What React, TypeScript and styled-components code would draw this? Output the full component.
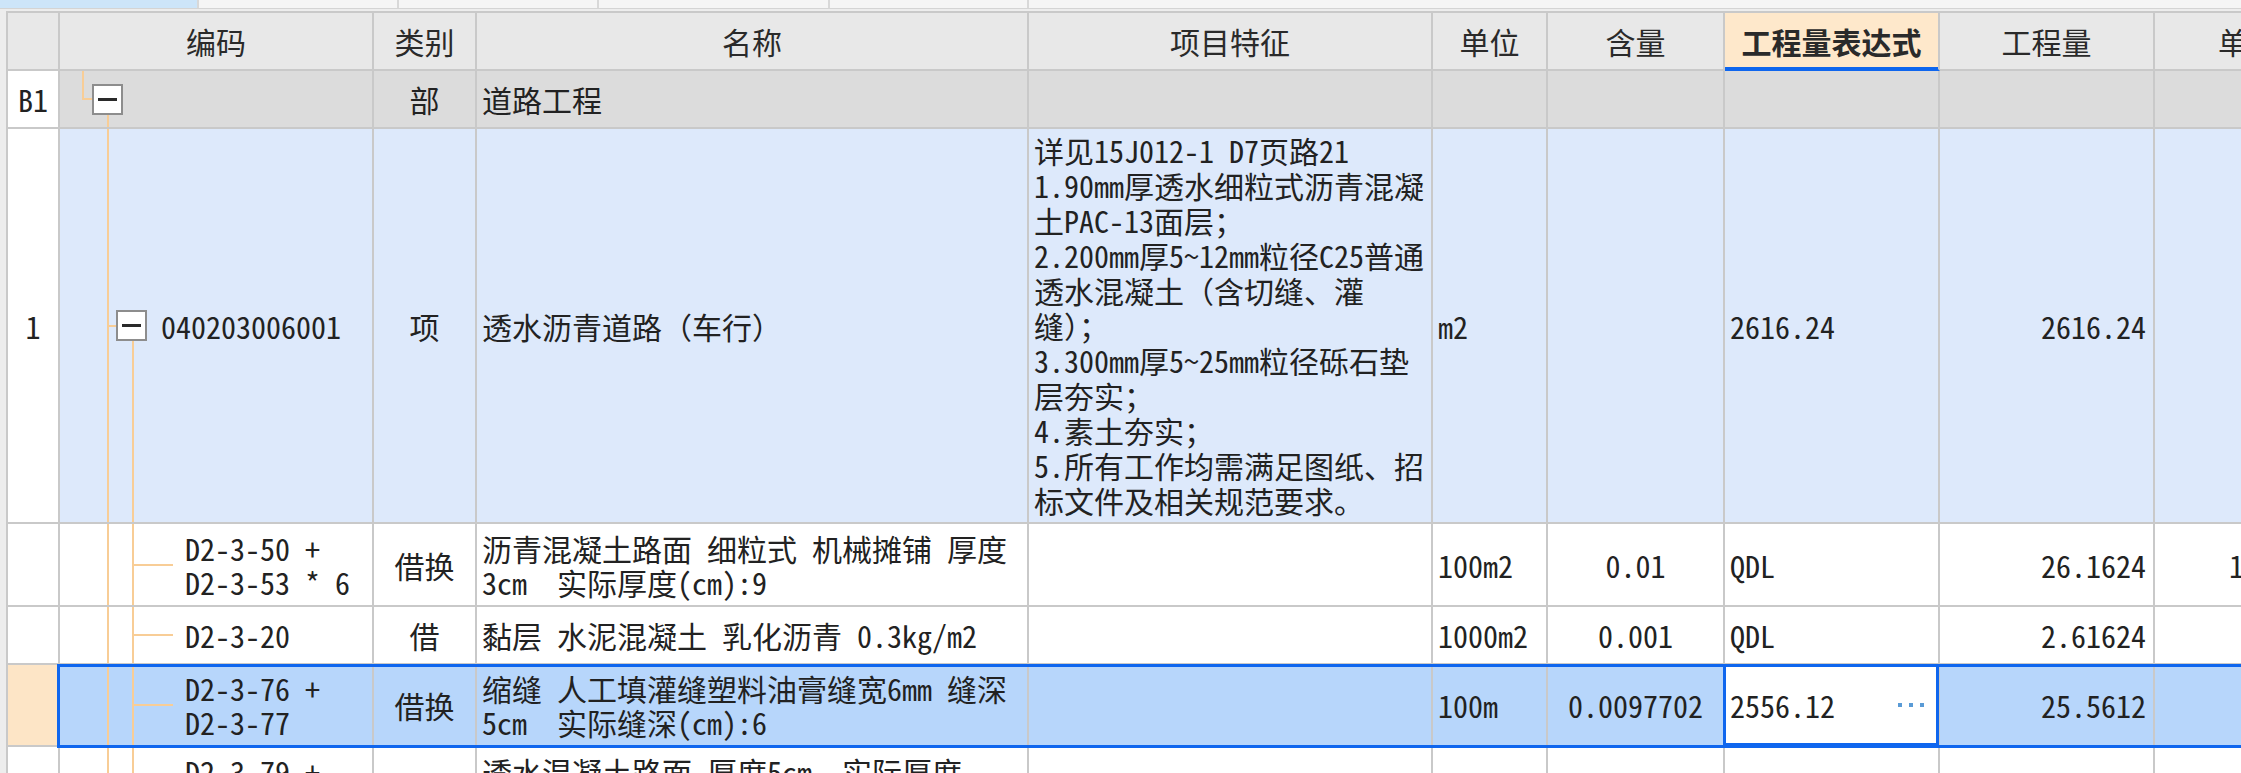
import React from 'react';
import styled, { createGlobalStyle, css } from 'styled-components';

const FONT = `"Noto Sans Mono CJK SC", "Noto Sans CJK SC", "Liberation Mono", monospace`;
const COLS = '52px 314px 103px 552px 404px 115px 177px 215px 215px 188px';
const LINE = '#c9c9c9';
const TREE = '#f8cd96';
const BLUE = '#0f66ee';

const GlobalStyle = createGlobalStyle`
  html, body { margin: 0; padding: 0; width: 2241px; height: 773px; overflow: hidden; background: #ededed; }
  #root { width: 2241px; height: 773px; overflow: hidden; }
  * { box-sizing: border-box; }
`;

const Page = styled.div`
  width: 2241px;
  height: 773px;
  overflow: hidden;
  display: flex;
  flex-direction: column;
  font-family: ${FONT};
  font-size: 30px;
  color: #222;
`;

const TabStrip = styled.div`
  display: flex;
  flex: none;
  height: 9px;
  background: #f5f5f5;
  border-bottom: 1px solid #d4d4d4;
`;

const Tab = styled.div<{ $w: number; $active?: boolean }>`
  flex: none;
  width: ${(p) => p.$w}px;
  background: ${(p) => (p.$active ? '#cde5f9' : '#f5f5f5')};
  border-right: 2px solid #d8d8d8;
`;

const Table = styled.div`
  flex: none;
  margin: 2px 0 0 6px;
  width: max-content;
  border-left: 2px solid ${LINE};
  border-top: 2px solid ${LINE};
`;

const Row = styled.div<{ $h: number; $bg: string; $selected?: boolean }>`
  display: grid;
  grid-template-columns: ${COLS};
  grid-template-rows: ${(p) => p.$h}px;
  height: ${(p) => p.$h}px;
  background: ${(p) => p.$bg};
  position: relative;
  ${(p) =>
    p.$selected &&
    css`
      &::after {
        content: '';
        position: absolute;
        left: 49px;
        right: -20px;
        top: -1px;
        bottom: -1px;
        border: 3px solid ${BLUE};
        pointer-events: none;
        z-index: 2;
      }
    `}
`;

type Align = 'left' | 'center' | 'right';

const Cell = styled.div<{ $align?: Align; $lh?: number; $bg?: string }>`
  min-width: 0;
  display: flex;
  align-items: center;
  justify-content: ${(p) =>
    p.$align === 'center' ? 'center' : p.$align === 'right' ? 'flex-end' : 'flex-start'};
  text-align: ${(p) => p.$align ?? 'left'};
  padding: 0 ${(p) => (p.$align === 'right' ? '7px' : '0')} 0 ${(p) => (p.$align === 'left' ? '5px' : '0')};
  border-right: 2px solid ${LINE};
  border-bottom: 2px solid ${LINE};
  background: ${(p) => p.$bg ?? 'transparent'};
  line-height: ${(p) => p.$lh ?? 34}px;
  white-space: pre;
  overflow: hidden;
`;

const HeadCell = styled(Cell).attrs({ $align: 'center' as Align })<{ $active?: boolean }>`
  color: #2a2a2a;
  ${(p) =>
    p.$active &&
    css`
      background: #fee8cb;
      font-weight: 700;
      border-bottom-color: ${BLUE};
      box-shadow: inset 0 -2px 0 ${BLUE};
    `}
`;

const CodeCell = styled(Cell)`
  align-items: stretch;
  padding: 0;
`;

const Guide = styled.div<{ $w: number; $x: number; $kind: 'pass' | 'tee' | 'elbow' }>`
  flex: none;
  align-self: stretch;
  width: ${(p) => p.$w}px;
  background-repeat: no-repeat;
  ${(p) => {
    const g = `linear-gradient(${TREE}, ${TREE})`;
    if (p.$kind === 'pass')
      return css`
        background-image: ${g};
        background-size: 2px 100%;
        background-position: ${p.$x}px 0;
      `;
    if (p.$kind === 'tee')
      return css`
        background-image: ${g}, ${g};
        background-size: 2px 100%, ${p.$w - p.$x}px 2px;
        background-position: ${p.$x}px 0, ${p.$x}px 50%;
      `;
    return css`
      background-image: ${g}, ${g};
      background-size: 2px 50%, ${p.$w - p.$x}px 2px;
      background-position: ${p.$x}px 0, ${p.$x}px 50%;
    `;
  }}
`;

const BoxCol = styled.div<{ $x: number }>`
  flex: none;
  align-self: stretch;
  width: 31px;
  display: flex;
  align-items: center;
  background: linear-gradient(${TREE}, ${TREE}) no-repeat;
  background-size: 2px 50%;
  background-position: ${(p) => p.$x}px 100%;
`;

const Toggle = styled.div`
  width: 31px;
  height: 31px;
  border: 2px solid #8d8d8d;
  background: #fff;
  display: flex;
  align-items: center;
  justify-content: center;
  &::before {
    content: '';
    width: 19px;
    height: 3px;
    background: #2a2a2a;
  }
`;

const CodeText = styled.div<{ $gap: number }>`
  align-self: center;
  margin-left: ${(p) => p.$gap}px;
  white-space: pre;
`;

const EditCell = styled(Cell)`
  position: relative;
  overflow: visible;
`;

const Editor = styled.div`
  position: absolute;
  left: -2px;
  right: -1px;
  top: -1px;
  bottom: -1px;
  z-index: 3;
  border: 3px solid ${BLUE};
  background: #fff;
  display: flex;
  align-items: center;
  justify-content: space-between;
  padding: 0 12px 0 4px;
`;

const Dots = styled.div`
  display: flex;
  gap: 7px;
  align-items: center;
`;

const Dot = styled.span`
  width: 4px;
  height: 4px;
  background: #5a9bd6;
`;

const TABS = [199, 200, 200, 231, 199];

const FEATURES = [
  '详见15J012-1 D7页路21',
  '1.90mm厚透水细粒式沥青混凝',
  '土PAC-13面层；',
  '2.200mm厚5~12mm粒径C25普通',
  '透水混凝土（含切缝、灌',
  '缝）；',
  '3.300mm厚5~25mm粒径砾石垫',
  '层夯实；',
  '4.素土夯实；',
  '5.所有工作均需满足图纸、招',
  '标文件及相关规范要求。',
].join('\n');

const ChildCode = ({ text }: { text: string }) => (
  <CodeCell>
    <Guide $kind="pass" $w={56} $x={47} />
    <Guide $kind="tee" $w={57} $x={16} />
    <CodeText $gap={12}>{text}</CodeText>
  </CodeCell>
);

export default function App() {
  return (
    <>
      <GlobalStyle />
      <Page>
        <TabStrip>
          {TABS.map((w, i) => (
            <Tab key={i} $w={w} $active={i === 0} />
          ))}
        </TabStrip>
        <Table>
          <Row $h={58} $bg="#e8e8e8">
            <HeadCell />
            <HeadCell>编码</HeadCell>
            <HeadCell>类别</HeadCell>
            <HeadCell>名称</HeadCell>
            <HeadCell>项目特征</HeadCell>
            <HeadCell>单位</HeadCell>
            <HeadCell>含量</HeadCell>
            <HeadCell $active>工程量表达式</HeadCell>
            <HeadCell>工程量</HeadCell>
            <HeadCell>单价</HeadCell>
          </Row>

          <Row $h={58} $bg="#dcdcdc">
            <Cell $align="center" $bg="#fff">B1</Cell>
            <CodeCell>
              <Guide $kind="elbow" $w={32} $x={22} />
              <BoxCol $x={15}>
                <Toggle />
              </BoxCol>
            </CodeCell>
            <Cell $align="center">部</Cell>
            <Cell $align="left">道路工程</Cell>
            <Cell />
            <Cell />
            <Cell />
            <Cell />
            <Cell />
            <Cell />
          </Row>

          <Row $h={395} $bg="#dde9fb">
            <Cell $align="center" $bg="#fff">1</Cell>
            <CodeCell>
              <Guide $kind="tee" $w={56} $x={47} />
              <BoxCol $x={16}>
                <Toggle />
              </BoxCol>
              <CodeText $gap={14}>040203006001</CodeText>
            </CodeCell>
            <Cell $align="center">项</Cell>
            <Cell $align="left">透水沥青道路（车行）</Cell>
            <Cell $align="left" $lh={35}>{FEATURES}</Cell>
            <Cell $align="left">m2</Cell>
            <Cell />
            <Cell $align="left">2616.24</Cell>
            <Cell $align="right">2616.24</Cell>
            <Cell />
          </Row>

          <Row $h={83} $bg="#fff">
            <Cell $bg="#fff" />
            <ChildCode text={'D2-3-50 +\nD2-3-53 * 6'} />
            <Cell $align="center">借换</Cell>
            <Cell $align="left">{'沥青混凝土路面 细粒式 机械摊铺 厚度\n3cm  实际厚度(cm):9'}</Cell>
            <Cell />
            <Cell $align="left">100m2</Cell>
            <Cell $align="center">0.01</Cell>
            <Cell $align="left">QDL</Cell>
            <Cell $align="right">26.1624</Cell>
            <Cell $align="right">1139.28</Cell>
          </Row>

          <Row $h={58} $bg="#fff">
            <Cell $bg="#fff" />
            <ChildCode text="D2-3-20" />
            <Cell $align="center">借</Cell>
            <Cell $align="left">黏层 水泥混凝土 乳化沥青 0.3kg/m2</Cell>
            <Cell />
            <Cell $align="left">1000m2</Cell>
            <Cell $align="center">0.001</Cell>
            <Cell $align="left">QDL</Cell>
            <Cell $align="right">2.61624</Cell>
            <Cell $align="right">48.12</Cell>
          </Row>

          <Row $h={82} $bg="#b7d6fb" $selected>
            <Cell $bg="#fde5c6" />
            <ChildCode text={'D2-3-76 +\nD2-3-77'} />
            <Cell $align="center">借换</Cell>
            <Cell $align="left">{'缩缝 人工填灌缝塑料油膏缝宽6mm 缝深\n5cm  实际缝深(cm):6'}</Cell>
            <Cell />
            <Cell $align="left">100m</Cell>
            <Cell $align="center">0.0097702</Cell>
            <EditCell>
              <Editor>
                <span>2556.12</span>
                <Dots>
                  <Dot />
                  <Dot />
                  <Dot />
                </Dots>
              </Editor>
            </EditCell>
            <Cell $align="right">25.5612</Cell>
            <Cell $align="right">785.53</Cell>
          </Row>

          <Row $h={83} $bg="#fff">
            <Cell $bg="#fff" />
            <ChildCode text={'D2-3-79 +\nD2-3-80 * 2'} />
            <Cell $align="center">借换</Cell>
            <Cell $align="left">{'透水混凝土路面 厚度5cm  实际厚度\n(cm):20'}</Cell>
            <Cell />
            <Cell $align="left">100m2</Cell>
            <Cell $align="center">0.01</Cell>
            <Cell $align="left">QDL</Cell>
            <Cell $align="right">26.1624</Cell>
            <Cell $align="right">985.40</Cell>
          </Row>
        </Table>
      </Page>
    </>
  );
}
